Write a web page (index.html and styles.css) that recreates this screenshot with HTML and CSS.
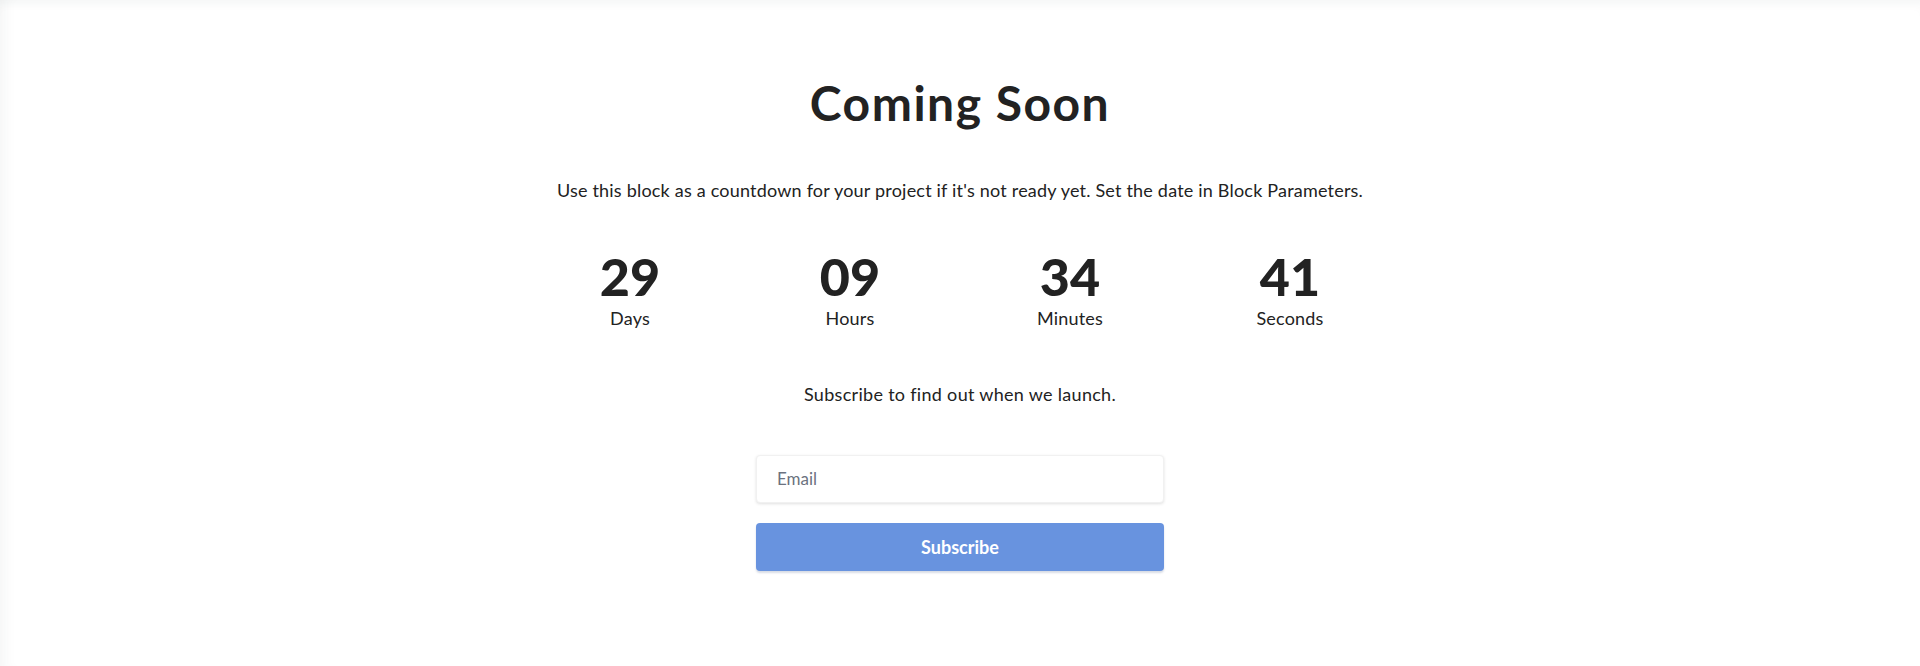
FILE: index.html
```html
<!DOCTYPE html>
<html lang="en">
<head>
<meta charset="utf-8">
<title>Coming Soon</title>
<link rel="stylesheet" href="styles.css">
</head>
<body>
<main class="page">
  <section class="hero">
    <h1 class="title">Coming Soon</h1>
    <p class="lead">Use this block as a countdown for your project if it's not ready yet. Set the date in Block Parameters.</p>
    <div class="countdown">
      <div class="unit"><span class="num">29</span><span class="label">Days</span></div>
      <div class="unit"><span class="num">09</span><span class="label">Hours</span></div>
      <div class="unit"><span class="num">34</span><span class="label">Minutes</span></div>
      <div class="unit"><span class="num">41</span><span class="label">Seconds</span></div>
    </div>
    <p class="note">Subscribe to find out when we launch.</p>
    <form class="form">
      <input class="email" type="email" placeholder="Email">
      <button class="btn" type="button">Subscribe</button>
    </form>
  </section>
</main>
</body>
</html>
```

FILE: styles.css
```css
html, body {
  margin: 0;
  padding: 0;
  background: #ffffff;
}
body {
  font-family: "Lato", "Noto Sans", sans-serif;
  color: #222222;
}
.page {
  min-height: 666px;
  box-sizing: border-box;
  box-shadow: inset 14px 0 14px -10px rgba(40, 60, 60, 0.05), inset 0 10px 12px -8px rgba(40, 60, 60, 0.06);
}
.hero {
  display: flex;
  flex-direction: column;
  align-items: center;
  padding-top: 74px;
}
.title {
  margin: 0;
  font-size: 48px;
  line-height: 1.2;
  font-weight: 700;
  letter-spacing: 1.5px;
  color: #222222;
}
.lead {
  margin: 45px 0 0;
  font-size: 18px;
  line-height: 1.5;
  letter-spacing: 0.2px;
}
.countdown {
  display: grid;
  grid-template-columns: repeat(4, 220px);
  margin-top: 46px;
}
.unit {
  display: flex;
  flex-direction: column;
  align-items: center;
}
.num {
  font-size: 52px;
  line-height: 1;
  font-weight: 900;
}
.label {
  margin-top: 3px;
  font-size: 18px;
  line-height: 1.5;
  letter-spacing: 0.2px;
}
.note {
  margin: 49px 0 0;
  font-size: 18px;
  line-height: 1.5;
  letter-spacing: 0.3px;
}
.form {
  display: flex;
  flex-direction: column;
  gap: 20px;
  width: 408px;
  margin-top: 47px;
}
.email {
  box-sizing: border-box;
  height: 48px;
  padding: 0 20px;
  border: 1px solid #f1f1f1;
  border-radius: 4px;
  box-shadow: 0 1px 3px rgba(0, 0, 0, 0.12);
  font-family: inherit;
  font-size: 17px;
  color: #222222;
  background: #ffffff;
  outline: none;
}
.email::placeholder {
  color: #6b7280;
}
.btn {
  height: 48px;
  border: 0;
  border-radius: 4px;
  background: #6893df;
  box-shadow: 0 2px 2px rgba(40, 60, 110, 0.18);
  color: #ffffff;
  font-family: inherit;
  font-size: 18px;
  font-weight: 700;
  cursor: pointer;
}
```
